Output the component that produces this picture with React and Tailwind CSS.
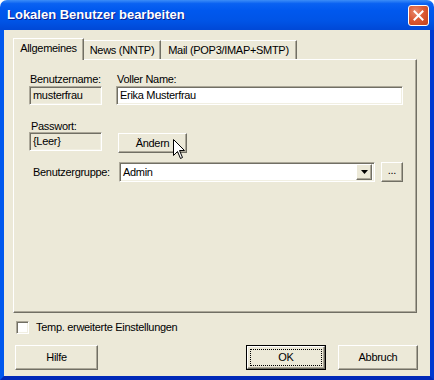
import React from 'react';

const raised =
  'border border-t-white border-l-white border-r-[#716F64] border-b-[#716F64] shadow-[inset_-1px_-1px_#ACA899] bg-[#ECE9D8]';
const sunken =
  'border border-t-[#ACA899] border-l-[#ACA899] border-r-white border-b-white shadow-[inset_1px_1px_#716F64,inset_-1px_-1px_#F1EFE2]';

const Field = ({ value, readOnly, className = '' }) => (
  <div
    className={`${sunken} ${readOnly ? 'bg-[#ECE9D8]' : 'bg-white'} h-[19px] flex items-center pl-[3px] ${className}`}
  >
    {value}
  </div>
);

const Button = ({ children, className = '' }) => (
  <div className={`${raised} flex items-center justify-center ${className}`}>{children}</div>
);

const Cursor = () => (
  <svg
    className="absolute left-[173px] top-[139px] z-20"
    width="13"
    height="21"
    viewBox="0 0 13 21"
  >
    <path
      d="M0.5 0.5 L0.5 16.5 L4.5 12.5 L7.5 19.5 L9.5 18.5 L6.5 11.5 L11.5 11.5 Z"
      fill="white"
      stroke="black"
      strokeWidth="1"
    />
  </svg>
);

export default function App() {
  return (
    <div className="relative w-[434px] h-[380px] bg-white flex flex-col font-['Liberation_Sans',Arial,sans-serif] text-[11px] tracking-[-0.3px] text-black select-none">
      {/* title bar */}
      <div className="h-[30px] rounded-t-[7px] bg-[linear-gradient(to_bottom,#3C8DF7_0%,#0A62F2_12%,#0058EE_35%,#0054E6_70%,#0048D6_100%)] flex items-center pl-[7px] pr-[5px]">
        <span className="flex-1 font-bold text-[13px] tracking-normal text-white [text-shadow:1px_1px_#0A1E8C]">
          Lokalen Benutzer bearbeiten
        </span>
        <div className="w-[21px] h-[21px] rounded-[3px] border border-white bg-[radial-gradient(circle_at_35%_30%,#E98A6E_0%,#DB5A35_45%,#C2401A_100%)] flex items-center justify-center">
          <svg width="11" height="11" viewBox="0 0 11 11">
            <path d="M1.5 1.5 L9.5 9.5 M9.5 1.5 L1.5 9.5" stroke="white" strokeWidth="2" strokeLinecap="square" />
          </svg>
        </div>
      </div>

      {/* body */}
      <div className="flex-1 bg-[#ECE9D8] border-l-4 border-r-4 border-b-4 border-l-[#0058EE] border-r-[#0038D0] border-b-[#0028B8] flex flex-col">
        <div className="pt-[8px] pl-[9px]">
          {/* tabs */}
          <div className="flex items-end h-[21px]">
            <div className="relative z-10 h-[22px] mb-[-1px] w-[71px] bg-[#ECE9D8] border-t border-l border-t-white border-l-white border-r border-r-[#716F64] shadow-[inset_-1px_0_#ACA899] flex items-center justify-center pb-[2px]">
              Allgemeines
            </div>
            <div className="h-[19px] w-[77px] border-t border-t-white border-r border-r-[#716F64] shadow-[inset_-1px_0_#ACA899] flex items-center justify-center pt-[1px]">
              News (NNTP)
            </div>
            <div className="h-[19px] w-[136px] border-t border-t-white border-r border-r-[#716F64] shadow-[inset_-1px_0_#ACA899] flex items-center justify-center pt-[1px]">
              Mail (POP3/IMAP+SMTP)
            </div>
          </div>

          {/* panel */}
          <div className="w-[404px] h-[254px] border border-t-white border-l-white border-r-[#716F64] border-b-[#716F64] shadow-[inset_-1px_-1px_#ACA899] pt-[11px] pl-[15px] flex flex-col">
            <div className="flex">
              <div className="flex flex-col w-[73px]">
                <div className="h-[15px] pl-[1px]">Benutzername:</div>
                <Field value="musterfrau" readOnly className="w-[73px]" />
              </div>
              <div className="flex flex-col ml-[14px]">
                <div className="h-[15px] pl-[1px]">Voller Name:</div>
                <Field value="Erika Musterfrau" className="w-[287px]" />
              </div>
            </div>

            <div className="flex mt-[13px]">
              <div className="flex flex-col w-[73px]">
                <div className="h-[14px] pl-[2px]">Passwort:</div>
                <Field value="{Leer}" readOnly className="w-[73px]" />
              </div>
              <Button className="ml-[16px] mt-[15px] w-[69px] h-[20px]">Ändern</Button>
            </div>

            <div className="flex items-center mt-[9px]">
              <div className="w-[90px] pl-[4px]">Benutzergruppe:</div>
              <div className={`${sunken} bg-white w-[256px] h-[20px] flex items-center pl-[3px] pr-[2px]`}>
                <span className="flex-1">Admin</span>
                <Button className="w-[16px] h-[16px]">
                  <svg width="7" height="4" viewBox="0 0 7 4">
                    <path d="M0 0 H7 L3.5 4 Z" fill="black" />
                  </svg>
                </Button>
              </div>
              <Button className="ml-[6px] w-[22px] h-[20px] pb-[3px]">...</Button>
            </div>
          </div>
        </div>

        {/* checkbox */}
        <div className="flex items-center mt-[8px] ml-[12px] h-[13px]">
          <div className={`${sunken} bg-white w-[13px] h-[13px]`} />
          <span className="ml-[7px]">Temp. erweiterte Einstellungen</span>
        </div>

        {/* buttons */}
        <div className="flex mt-[11px] pl-[11px]">
          <Button className="w-[83px] h-[25px]">Hilfe</Button>
          <div className="ml-[148px] w-[80px] h-[25px] border border-black flex">
            <div className={`${raised} flex-1 p-[2px] flex`}>
              <div className="flex-1 border border-dotted border-black flex items-center justify-center">OK</div>
            </div>
          </div>
          <Button className="ml-[12px] w-[80px] h-[25px]">Abbruch</Button>
        </div>
      </div>

      <Cursor />
    </div>
  );
}
